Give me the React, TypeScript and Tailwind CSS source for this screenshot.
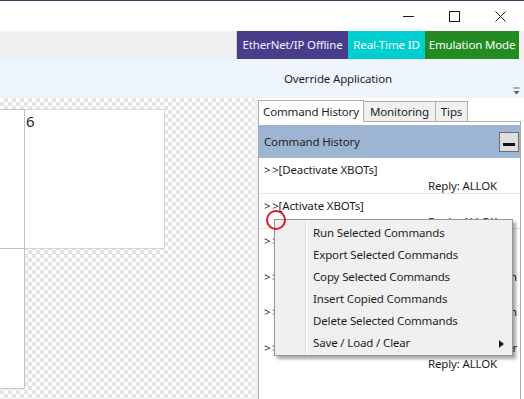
import React from "react";

const rows = [
  { cmd: ">\u2009>[Deactivate XBOTs]", tail: "", reply: "Reply: ALLOK" },
  { cmd: ">\u2009>[Activate XBOTs]", tail: "", reply: "Reply: ALLOK" },
  { cmd: ">\u2009>[Levitation Control] Levitate All XBOTs", tail: "", reply: "Reply: ALLOK" },
  { cmd: ">\u2009>[Linear Motion] XBOT 1 Position", tail: "Motion", reply: "Reply: ALLOK" },
  { cmd: ">\u2009>[Linear Motion] XBOT 2 Position", tail: "Motion", reply: "Reply: ALLOK" },
  { cmd: ">\u2009>[Wait Until] XBOT 1 Motion Done", tail: "Controller", reply: "Reply: ALLOK" },
];

const menuItems = [
  "Run Selected Commands",
  "Export Selected Commands",
  "Copy Selected Commands",
  "Insert Copied Commands",
  "Delete Selected Commands",
  "Save / Load / Clear",
];

export default function App() {
  return (
    <div className="relative w-[524px] h-[399px] overflow-hidden bg-white font-['Segoe_UI','Noto_Sans',sans-serif] text-[11.5px] tracking-[-0.15px] text-[#1e1e1e]">
      {/* window top border */}
      <div className="h-[1px] bg-[#33435e]" />

      {/* title bar */}
      <div className="h-[30px] flex justify-end items-center bg-white">
        <div className="w-[46px] h-full flex items-center justify-center">
          <svg width="11" height="11" viewBox="0 0 11 11">
            <line x1="0" y1="5.5" x2="11" y2="5.5" stroke="#1a1a1a" strokeWidth="1" />
          </svg>
        </div>
        <div className="w-[46px] h-full flex items-center justify-center">
          <svg width="11" height="11" viewBox="0 0 11 11">
            <rect x="0.5" y="0.5" width="10" height="10" fill="none" stroke="#1a1a1a" strokeWidth="1" />
          </svg>
        </div>
        <div className="w-[46px] h-full flex items-center justify-center">
          <svg width="11" height="11" viewBox="0 0 11 11">
            <path d="M0.5 0.5 L10.5 10.5 M10.5 0.5 L0.5 10.5" stroke="#1a1a1a" strokeWidth="1" />
          </svg>
        </div>
        <div className="w-[1px]" />
      </div>

      {/* status bar */}
      <div className="h-[28px] flex justify-end bg-[#f0f0f0] pr-[5px]">
        <div className="w-[112px] flex items-center justify-center bg-[#483d8b] text-[#f4f2ff] border-l border-[#d0d0d0] whitespace-nowrap">
          EtherNet/IP Offline
        </div>
        <div className="w-[77px] flex items-center justify-center bg-[#00ced1] text-white whitespace-nowrap">
          Real-Time ID
        </div>
        <div className="w-[94px] flex items-center justify-center bg-[#228b22] text-white whitespace-nowrap">
          Emulation Mode
        </div>
      </div>

      {/* toolbar */}
      <div className="relative h-[39px] flex items-center bg-[#eef5fc] pl-[284px]">
        <span className="whitespace-nowrap text-[#1e1e1e]">Override Application</span>
        <svg className="absolute left-[513px] top-[28px]" width="7" height="8" viewBox="0 0 7 8">
          <line x1="0.5" y1="1" x2="6.5" y2="1" stroke="#606060" strokeWidth="1" />
          <path d="M0.5 4 L6.5 4 L3.5 7.5 Z" fill="#606060" />
        </svg>
      </div>

      {/* content */}
      <div className="flex h-[301px]">
        {/* canvas */}
        <div className="w-[254px] h-full pt-[11px] bg-[image:repeating-conic-gradient(#e4e4e4_0%_25%,#ffffff_0%_50%)] bg-[length:8px_8px]">
          <div className="flex items-start">
            <div className="flex flex-col">
              <div className="w-[25px] h-[140px] bg-white border-t border-r border-b border-[#c4c4c4]" />
              <div className="w-[25px] h-[140px] bg-white border-r border-b border-[#c4c4c4]" />
            </div>
            <div className="w-[140px] h-[140px] bg-white border-t border-r border-b border-[#d4d4d4] pl-[1px] pt-[1px] text-[15px] tracking-normal leading-[20px] text-[#1c1c2a]">
              6
            </div>
          </div>
        </div>

        {/* splitter */}
        <div className="w-[4px] h-full bg-[#f0f0f0]" />

        {/* right panel */}
        <div className="w-[263px] h-full flex flex-col bg-white">
          {/* tabs */}
          <div className="h-[23px] pt-[1px] flex items-end">
            <div className="relative z-10 w-[106px] h-[22px] -mb-[1px] flex items-center justify-center bg-white border-t border-l border-r border-[#acacac] whitespace-nowrap">
              Command History
            </div>
            <div className="w-[72px] h-[20px] flex items-center justify-center bg-[#f0f0f0] border-t border-r border-[#acacac] whitespace-nowrap">
              Monitoring
            </div>
            <div className="w-[32px] h-[20px] flex items-center justify-center bg-[#f0f0f0] border-t border-r border-[#acacac] whitespace-nowrap">
              Tips
            </div>
          </div>

          {/* tab content */}
          <div className="flex-1 border-t border-l border-r border-[#acacac] pt-[3px] flex flex-col">
            <div className="h-[33px] flex items-center justify-between bg-[#9db5d3] pl-[5px] pr-[1px]">
              <span className="whitespace-nowrap">Command History</span>
              <div className="w-[20px] h-[20px] flex items-end justify-center pb-[5px] bg-[#dedede] border border-[#6e6e6e]">
                <div className="w-[12px] h-[3px] bg-[#111111]" />
              </div>
            </div>

            <div className="flex flex-col">
              {rows.map((r, i) => (
                <div
                  key={i}
                  className={
                    "h-[35.6px] pt-[4px] pl-[5px] pr-[3px] " +
                    (i < 2 ? "border-b border-[#e4e4e4]" : "")
                  }
                >
                  <div className="flex leading-[16px] whitespace-nowrap">
                    <span className="flex-1 overflow-hidden">{r.cmd}</span>
                    {r.tail && <span className="shrink-0">{r.tail}</span>}
                  </div>
                  <div className="leading-[16px] text-right pr-[20px] whitespace-nowrap">{r.reply}</div>
                </div>
              ))}
            </div>
          </div>
        </div>
        <div className="w-[3px] h-full bg-white" />
      </div>

      {/* context menu */}
      <div className="absolute left-[274px] top-[219px] w-[239px] pt-[2px] pb-[1px] bg-[#f0f0f0] border border-[#979797] shadow-[3px_3px_3px_rgba(0,0,0,0.35)]">
        <div className="absolute left-[30px] top-0 bottom-0 w-[1px] bg-[#dcdcdc]" />
        <div className="absolute left-[31px] top-0 bottom-0 w-[1px] bg-white" />
        {menuItems.map((m, i) => (
          <div key={i} className="relative h-[22px] flex items-center pl-[38px] whitespace-nowrap text-[#1e1e1e]">
            {m}
            {i === menuItems.length - 1 && (
              <svg className="absolute left-[224px] top-[8px]" width="5" height="8" viewBox="0 0 5 8">
                <path d="M0 0 L5 4 L0 8 Z" fill="#1e1e1e" />
              </svg>
            )}
          </div>
        ))}
      </div>

      {/* red circle marker */}
      <div className="absolute left-[266px] top-[210px] w-[20px] h-[20px] rounded-full border-[2.5px] border-[#e8161c]" />
    </div>
  );
}
